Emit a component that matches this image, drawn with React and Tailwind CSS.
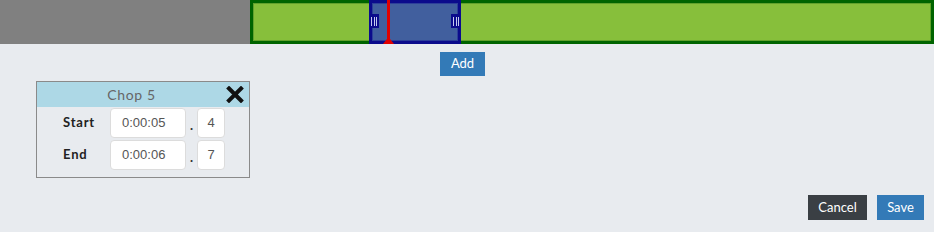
import React from "react";

function Handle({ side }) {
  return (
    <div
      className={`absolute top-[11px] h-[14px] w-[10px] bg-[#0b0b8c] flex items-center justify-center gap-[1.5px] ${side === "left" ? "left-[-3px]" : "right-[-3px]"}`}
    >
      <div className="w-[1px] h-[9px] bg-[#c3c9ee]" />
      <div className="w-[1px] h-[9px] bg-[#c3c9ee]" />
      <div className="w-[1px] h-[9px] bg-[#c3c9ee]" />
    </div>
  );
}

function Row({ label, time, frac }) {
  return (
    <div className="flex items-center h-[30px]">
      <div className="w-[47px] ml-[26px] text-[13px] font-bold text-[#222] font-['Lato',sans-serif] tracking-[0.8px]">
        {label}
      </div>
      <div className="w-[76px] h-[30px] bg-white border border-[#dcdcdc] rounded-[4px] flex items-center pl-[11px] text-[13px] text-[#555] font-['Liberation_Sans',Arial,sans-serif]">
        {time}
      </div>
      <div className="w-[11px] text-center text-[13px] font-bold text-[#333] leading-none pt-[4px]">.</div>
      <div className="w-[28px] h-[30px] bg-white border border-[#dcdcdc] rounded-[4px] flex items-center justify-center text-[13px] text-[#555] font-['Liberation_Sans',Arial,sans-serif]">
        {frac}
      </div>
    </div>
  );
}

export default function App() {
  return (
    <div className="w-[934px] h-[232px] bg-[#e8ebef] flex flex-col font-['Lato',sans-serif] overflow-hidden">
      {/* timeline */}
      <div className="flex h-[44px]">
        <div className="w-[250px] bg-[#808080]" />
        <div className="flex-1 relative bg-[#87bf3b] border-[3px] border-[#006400] shadow-[inset_0_0_0_1px_#62a12c]">
          <div className="absolute left-[116px] top-[-3px] w-[92px] h-[44px] bg-[#415f9e] border-[3px] border-[#0b0b8c] shadow-[inset_0_0_0_1px_#2d3f9a]">
            <Handle side="left" />
            <Handle side="right" />
            <div className="absolute left-[15px] top-[-3px] w-[3px] h-[42px] bg-[#e10000]" />
            <svg className="absolute left-[11px] top-[34px]" width="11" height="7" viewBox="0 0 11 7">
              <polygon points="5.5,0 11,7 0,7" fill="#e10000" />
            </svg>
          </div>
        </div>
      </div>

      {/* add */}
      <div className="flex mt-[8px]">
        <button className="ml-[440px] w-[45px] h-[24px] bg-[#337ab7] text-white text-[13px] flex items-center justify-center">
          Add
        </button>
      </div>

      {/* chop dialog */}
      <div className="ml-[36px] mt-[5px] w-[214px] border border-[#8a8a8a] flex flex-col pb-[7px]">
        <div className="h-[25px] bg-[#add8e6] flex items-center">
          <div className="flex-1 text-center text-[14px] text-[#666] tracking-[0.6px]">Chop 5</div>
          <svg className="mr-[5px]" width="18" height="17" viewBox="0 0 18 17">
            <path d="M3 2.5 L15 14.5 M15 2.5 L3 14.5" stroke="#111" strokeWidth="4" strokeLinecap="square" />
          </svg>
        </div>
        <div className="flex flex-col gap-[2px] pt-[1px]">
          <Row label="Start" time="0:00:05" frac="4" />
          <Row label="End" time="0:00:06" frac="7" />
        </div>
      </div>

      {/* footer */}
      <div className="flex justify-end gap-[10px] pr-[10px] mt-[17px]">
        <button className="w-[59px] h-[25px] bg-[#3a3f44] text-white text-[13px] flex items-center justify-center">
          Cancel
        </button>
        <button className="w-[47px] h-[25px] bg-[#337ab7] text-white text-[13px] flex items-center justify-center">
          Save
        </button>
      </div>
    </div>
  );
}
